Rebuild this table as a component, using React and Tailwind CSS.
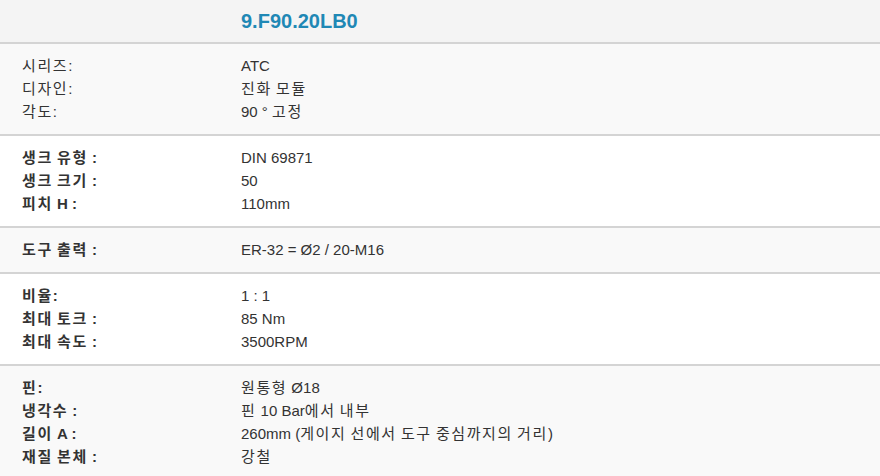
import React from 'react';

const sections = [
  {
    bg: 'bg-[#f9f9f9]',
    bold: false,
    rows: [
      ['시리즈:', 'ATC'],
      ['디자인:', '진화 모듈'],
      ['각도:', '90 ° 고정'],
    ],
  },
  {
    bg: 'bg-white',
    bold: true,
    rows: [
      ['생크 유형 :', 'DIN 69871'],
      ['생크 크기 :', '50'],
      ['피치 H :', '110mm'],
    ],
  },
  {
    bg: 'bg-[#f9f9f9]',
    bold: true,
    rows: [['도구 출력 :', 'ER-32 = Ø2 / 20-M16']],
  },
  {
    bg: 'bg-white',
    bold: true,
    rows: [
      ['비율:', '1 : 1'],
      ['최대 토크 :', '85 Nm'],
      ['최대 속도 :', '3500RPM'],
    ],
  },
  {
    bg: 'bg-[#f9f9f9]',
    bold: true,
    rows: [
      ['핀:', '원통형 Ø18'],
      ['냉각수 :', '핀 10 Bar에서 내부'],
      ['길이 A :', '260mm (게이지 선에서 도구 중심까지의 거리)'],
      ['재질 본체 :', '강철'],
    ],
  },
];

// Hangul runs are set a little wider, like the original page's font
const Text = ({ children }) =>
  children.split(/([\uAC00-\uD7A3]+)/).map((part, i) =>
    /[\uAC00-\uD7A3]/.test(part) ? (
      <span key={i} className="tracking-[1.6px]">
        {part}
      </span>
    ) : (
      <span key={i}>{part}</span>
    )
  );

const App = () => {
  return (
    <div className="w-[880px] h-[476px] overflow-hidden bg-white text-[#333] font-['Liberation_Sans','Noto_Sans_CJK_KR',sans-serif]">
      {/* Header */}
      <div className="flex items-center h-[44px] bg-[#f4f4f4] border-b-2 border-[#d4d4d4]">
        <div className="w-[241px] shrink-0" />
        <h1 className="text-[20px] font-bold text-[#1f88b5]">9.F90.20LB0</h1>
      </div>

      {/* Spec sections */}
      {sections.map((section, idx) => (
        <div
          key={idx}
          className={`${section.bg} border-b-2 border-[#d4d4d4] pt-[10px] pb-[11px]`}
        >
          {section.rows.map(([label, value], i) => (
            <div key={i} className="flex text-[15px] leading-[23px]">
              <div
                className={`w-[241px] shrink-0 pl-[22px] ${section.bold ? 'font-bold' : ''}`}
              >
                <Text>{label}</Text>
              </div>
              <div>
                <Text>{value}</Text>
              </div>
            </div>
          ))}
        </div>
      ))}
    </div>
  );
};

export default App;
